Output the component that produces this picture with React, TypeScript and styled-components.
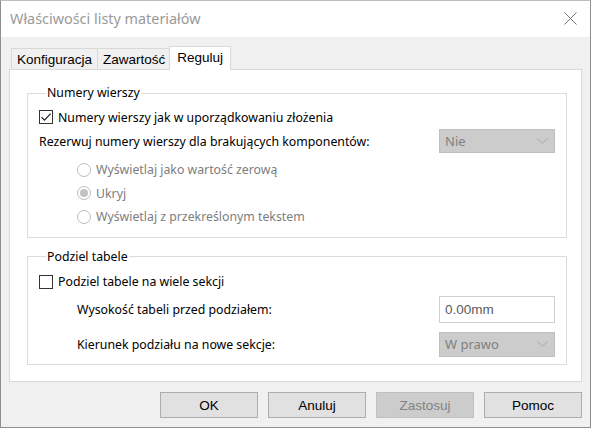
import React from 'react';
import styled, { createGlobalStyle } from 'styled-components';

const Global = createGlobalStyle`
  html, body { margin: 0; padding: 0; background: #ffffff; }
  * { box-sizing: border-box; }
`;

const Window = styled.div`
  width: 591px;
  height: 428px;
  border: 1px solid #8f8f8f;
  border-top-color: #bdbdbd;
  display: flex;
  flex-direction: column;
  background: #f0f0f0;
  font-family: "Noto Sans", "Segoe UI", sans-serif;
  font-size: 12.3px;
  color: #000;
`;

const TitleBar = styled.div`
  height: 36px;
  flex: none;
  background: #ffffff;
  display: flex;
  align-items: center;
  justify-content: space-between;
  padding: 0 13px 1px 9px;
`;

const Title = styled.div`
  font-size: 14.4px;
  color: #9a9a9a;
`;

const CloseIcon = styled.svg`
  width: 13px;
  height: 13px;
  display: block;
`;

const Body = styled.div`
  flex: 1;
  display: flex;
  flex-direction: column;
  padding: 9px 8px 9px 8px;
  min-height: 0;
`;

const TabList = styled.div`
  display: flex;
  align-items: flex-end;
  height: 23px;
  padding-left: 3px;
  position: relative;
  z-index: 1;
`;

const Tab = styled.div<{ $active?: boolean }>`
  font-family: "Liberation Sans", Arial, sans-serif;
  font-size: 13.5px;
  display: flex;
  align-items: center;
  border: 1px solid #d9d9d9;
  border-bottom: none;
  margin-left: -1px;
  height: ${p => (p.$active ? '24px' : '21px')};
  padding: ${p => (p.$active ? '0 7px 2px' : '0 5px')};
  margin-bottom: ${p => (p.$active ? '-1px' : '0')};
  background: ${p => (p.$active ? '#ffffff' : '#f0f0f0')};
  ${p => (p.$active ? 'margin-left: -2px; margin-right: -2px;' : '')}
`;

const Panel = styled.div`
  height: 313px;
  flex: none;
  background: #ffffff;
  border: 1px solid #d9d9d9;
  padding: 15px 14px 0 17px;
  display: flex;
  flex-direction: column;
  gap: 11px;
`;

const Group = styled.fieldset`
  margin: 0;
  border: 1px solid #dcdcdc;
  padding: 0 11px;
  display: flex;
  flex-direction: column;
  min-width: 0;
`;

const Legend = styled.legend`
  padding: 0 1px;
  margin-left: 7px;
  line-height: 16px;
  font-size: 12.3px;
`;

const Row = styled.div<{ $h: number; $mt?: number; $indent?: number }>`
  display: flex;
  align-items: center;
  height: ${p => p.$h}px;
  margin-top: ${p => p.$mt ?? 0}px;
  padding-left: ${p => p.$indent ?? 0}px;
`;

const Label = styled.span<{ $disabled?: boolean }>`
  color: ${p => (p.$disabled ? '#7d7d7d' : '#000')};
  white-space: nowrap;
  flex: 1;
`;

const CheckBox = styled.span`
  width: 14px;
  height: 14px;
  border: 1px solid #333333;
  background: #fff;
  margin-right: 5px;
  flex: none;
  display: flex;
  align-items: center;
  justify-content: center;
`;

const Radio = styled.span<{ $checked?: boolean }>`
  width: 14px;
  height: 14px;
  border-radius: 50%;
  border: 1px solid #bcbcbc;
  background: #fff;
  margin-right: 5px;
  flex: none;
  display: flex;
  align-items: center;
  justify-content: center;
  &::after {
    content: '';
    width: 8px;
    height: 8px;
    border-radius: 50%;
    background: ${p => (p.$checked ? '#c2c2c2' : 'transparent')};
  }
`;

const Select = styled.div<{ $h?: number }>`
  width: 116px;
  height: ${p => p.$h ?? 24}px;
  flex: none;
  background: #cccccc;
  border: 1px solid #bfbfbf;
  display: flex;
  align-items: center;
  justify-content: space-between;
  padding: 0 6px 0 5px;
  color: #808080;
  font-size: 13px;
`;

const Input = styled.div`
  width: 116px;
  height: 27px;
  flex: none;
  background: #ffffff;
  border: 1px solid #cfcfcf;
  display: flex;
  align-items: center;
  padding: 0 5px;
  color: #5c5c5c;
  font-family: "Liberation Sans", Arial, sans-serif;
  font-size: 13.5px;
`;

const Chevron = styled.svg`
  width: 11px;
  height: 6px;
  display: block;
`;

const ButtonRow = styled.div`
  display: flex;
  justify-content: flex-end;
  gap: 10px;
  margin-top: 10px;
`;

const Button = styled.button<{ $disabled?: boolean }>`
  width: 98px;
  height: 26px;
  font-family: "Liberation Sans", Arial, sans-serif;
  font-size: 13.5px;
  background: ${p => (p.$disabled ? '#cccccc' : '#e1e1e1')};
  border: 1px solid ${p => (p.$disabled ? '#bfbfbf' : '#adadad')};
  color: ${p => (p.$disabled ? '#838383' : '#000')};
  padding: 0;
  border-radius: 0;
`;

const Check = () => (
  <svg width="12" height="12" viewBox="0 0 12 12">
    <path d="M1.5 6.2 L4.5 9.2 L10.6 2.6" fill="none" stroke="#222" strokeWidth="1.2" />
  </svg>
);

const Down = () => (
  <Chevron viewBox="0 0 11 6">
    <path d="M0.5 0.5 L5.5 5.2 L10.5 0.5" fill="none" stroke="#a8a8a8" strokeWidth="1" />
  </Chevron>
);

export default function App() {
  return (
    <>
      <Global />
      <Window>
        <TitleBar>
          <Title>Właściwości listy materiałów</Title>
          <CloseIcon viewBox="0 0 13 13">
            <path d="M0.5 0.5 L12.5 12.5 M12.5 0.5 L0.5 12.5" stroke="#777" strokeWidth="1" />
          </CloseIcon>
        </TitleBar>
        <Body>
          <TabList>
            <Tab>Konfiguracja</Tab>
            <Tab>Zawartość</Tab>
            <Tab $active>Reguluj</Tab>
          </TabList>
          <Panel>
            <Group>
              <Legend>Numery wierszy</Legend>
              <Row $h={20} $mt={6}>
                <CheckBox><Check /></CheckBox>
                <Label>Numery wierszy jak w uporządkowaniu złożenia</Label>
              </Row>
              <Row $h={24} $mt={2}>
                <Label>Rezerwuj numery wierszy dla brakujących komponentów:</Label>
                <Select>
                  <span>Nie</span>
                  <Down />
                </Select>
              </Row>
              <Row $h={23.5} $mt={5} $indent={38}>
                <Radio />
                <Label $disabled>Wyświetlaj jako wartość zerową</Label>
              </Row>
              <Row $h={23.5} $indent={38}>
                <Radio $checked />
                <Label $disabled>Ukryj</Label>
              </Row>
              <Row $h={23.5} $indent={38}>
                <Radio />
                <Label $disabled>Wyświetlaj z przekreślonym tekstem</Label>
              </Row>
              <Row $h={8} />
            </Group>
            <Group>
              <Legend>Podziel tabele</Legend>
              <Row $h={20} $mt={7}>
                <CheckBox />
                <Label>Podziel tabele na wiele sekcji</Label>
              </Row>
              <Row $h={27} $mt={4} $indent={38}>
                <Label>Wysokość tabeli przed podziałem:</Label>
                <Input>0.00mm</Input>
              </Row>
              <Row $h={25} $mt={9} $indent={38}>
                <Label>Kierunek podziału na nowe sekcje:</Label>
                <Select $h={25}>
                  <span>W prawo</span>
                  <Down />
                </Select>
              </Row>
              <Row $h={7} />
            </Group>
          </Panel>
          <ButtonRow>
            <Button>OK</Button>
            <Button>Anuluj</Button>
            <Button $disabled>Zastosuj</Button>
            <Button>Pomoc</Button>
          </ButtonRow>
        </Body>
      </Window>
    </>
  );
}
